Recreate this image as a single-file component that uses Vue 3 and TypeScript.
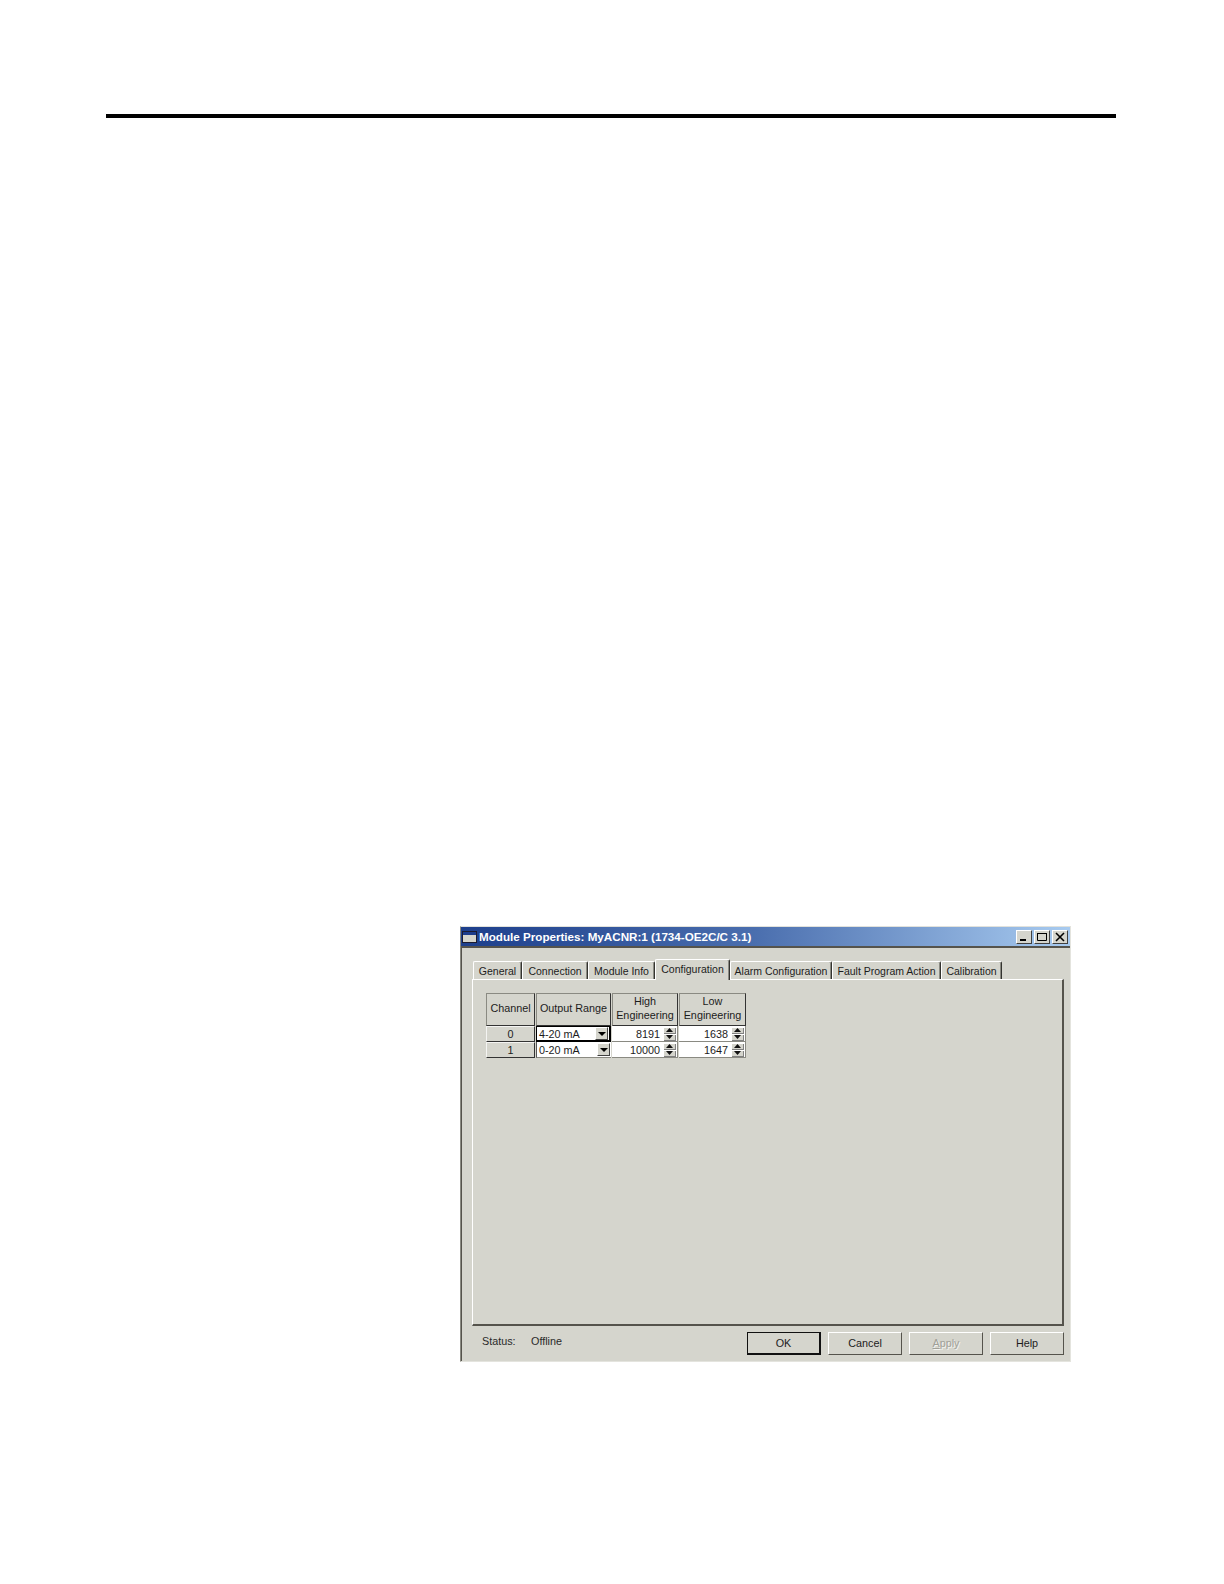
<script setup lang="ts">
const tabs = [
  { label: 'General', width: 49 },
  { label: 'Connection', width: 66 },
  { label: 'Module Info', width: 67 },
  { label: 'Configuration', width: 75, active: true },
  { label: 'Alarm Configuration', width: 102 },
  { label: 'Fault Program Action', width: 109 },
  { label: 'Calibration', width: 61 },
]

const channels = [
  { id: 0, range: '4-20 mA', high: '8191', low: '1638', focused: true },
  { id: 1, range: '0-20 mA', high: '10000', low: '1647', focused: false },
]

const buttons = [
  { label: 'OK', primary: true },
  { label: 'Cancel' },
  { label: 'Apply', disabled: true, mnemonic: 'A' },
  { label: 'Help' },
]
</script>

<template>
  <div class="page">
    <div class="rule"></div>

    <div class="dialog">
      <div class="titlebar">
        <svg class="app-icon" width="15" height="12" viewBox="0 0 15 12">
          <rect x="0.5" y="0.5" width="14" height="11" fill="#d5d5cd" stroke="#1c1c30" />
          <rect x="1" y="1" width="13" height="3" fill="#1c3c8c" />
        </svg>
        <span class="title">Module Properties: MyACNR:1 (1734-OE2C/C 3.1)</span>
        <div class="caption-btns">
          <span class="caption-btn">
            <svg width="12" height="10" viewBox="0 0 12 10"><rect x="2" y="7" width="6" height="2" fill="#000" /></svg>
          </span>
          <span class="caption-btn">
            <svg width="12" height="10" viewBox="0 0 12 10"><path d="M1.5 1.5h9v7h-9z" fill="none" stroke="#000" /><path d="M1 1.5h10" stroke="#000" /></svg>
          </span>
          <span class="caption-btn close">
            <svg width="12" height="10" viewBox="0 0 12 10"><path d="M2 1l8 8M10 1l-8 8" fill="none" stroke="#000" stroke-width="1.6" /></svg>
          </span>
        </div>
      </div>

      <div class="body">
        <div class="tabs">
          <div
            v-for="tab in tabs"
            :key="tab.label"
            class="tab"
            :class="{ active: tab.active }"
            :style="{ width: tab.width + 'px' }"
          >
            {{ tab.label }}
          </div>
        </div>

        <div class="panel">
          <div class="grid">
            <div class="head">Channel</div>
            <div class="head">Output Range</div>
            <div class="head">High<br />Engineering</div>
            <div class="head">Low<br />Engineering</div>

            <template v-for="ch in channels" :key="ch.id">
              <div class="rowhead">{{ ch.id }}</div>
              <div class="cell combo" :class="{ focused: ch.focused }">
                <span class="combo-text">{{ ch.range }}</span>
                <span class="drop">
                  <svg width="8" height="4" viewBox="0 0 8 4"><path d="M0 0h8L4 4z" fill="#000" /></svg>
                </span>
              </div>
              <div class="cell num">
                <span class="num-text">{{ ch.high }}</span>
                <span class="spin">
                  <span class="spin-btn"><svg width="7" height="4" viewBox="0 0 7 4"><path d="M3.5 0L7 4H0z" fill="#111" /></svg></span>
                  <span class="spin-btn"><svg width="7" height="4" viewBox="0 0 7 4"><path d="M0 0h7L3.5 4z" fill="#111" /></svg></span>
                </span>
              </div>
              <div class="cell num">
                <span class="num-text">{{ ch.low }}</span>
                <span class="spin">
                  <span class="spin-btn"><svg width="7" height="4" viewBox="0 0 7 4"><path d="M3.5 0L7 4H0z" fill="#111" /></svg></span>
                  <span class="spin-btn"><svg width="7" height="4" viewBox="0 0 7 4"><path d="M0 0h7L3.5 4z" fill="#111" /></svg></span>
                </span>
              </div>
            </template>
          </div>
        </div>

        <div class="footer">
          <span class="status-label">Status:</span>
          <span class="status-value">Offline</span>
          <div class="actions">
            <button
              v-for="b in buttons"
              :key="b.label"
              class="btn"
              :class="{ primary: b.primary, disabled: b.disabled }"
            >
              <template v-if="b.mnemonic"><u>{{ b.mnemonic }}</u>{{ b.label.slice(1) }}</template>
              <template v-else>{{ b.label }}</template>
            </button>
          </div>
        </div>
      </div>
    </div>
  </div>
</template>

<style scoped>
.page {
  width: 1224px;
  height: 1584px;
  background: #fff;
  padding-top: 114px;
  box-sizing: border-box;
  font-family: "Liberation Sans", Arial, sans-serif;
  font-size: 10.8px;
  color: #1c1c1c;
  overflow: hidden;
}

.rule {
  width: 1010px;
  height: 4px;
  margin-left: 106px;
  background: #000;
}

.dialog {
  width: 611px;
  height: 436px;
  margin: 808px 0 0 460px;
  box-sizing: border-box;
  background: #d5d5cd;
  border-top: 1px solid #e2e2dc;
  border-left: 1px solid #8a8a82;
  border-right: 1px solid #e4e4de;
  border-bottom: 1px solid #e4e4de;
  display: flex;
  flex-direction: column;
}

.titlebar {
  height: 19px;
  display: flex;
  align-items: center;
  padding-left: 1px;
  background: linear-gradient(90deg, #1d3f8c 0%, #4a6eae 48%, #a8cbf0 100%);
  border-bottom: 2px solid #55534c;
  flex: none;
}

.app-icon {
  flex: none;
}

.title {
  margin-left: 2px;
  font-weight: 700;
  font-size: 11.65px;
  color: #fff;
  white-space: nowrap;
}

.caption-btns {
  margin-left: auto;
  margin-right: 2px;
  display: flex;
  gap: 2px;
}

.caption-btn {
  width: 16px;
  height: 14px;
  box-sizing: border-box;
  display: flex;
  align-items: center;
  justify-content: center;
  background: #d5d5cd;
  border: 1px solid;
  border-color: #fff #404040 #404040 #fff;
}

.body {
  flex: 1;
  display: flex;
  flex-direction: column;
  padding: 0 6px 0 10px;
  border-left: 1px solid #55534c;
  min-height: 0;
}

.tabs {
  display: flex;
  align-items: flex-end;
  height: 31px;
  padding-left: 1px;
  flex: none;
  position: relative;
  z-index: 1;
}

.tab {
  height: 18px;
  box-sizing: border-box;
  text-align: center;
  line-height: 19px;
  font-size: 10.5px;
  white-space: nowrap;
  background: #d5d5cd;
  border-top: 1px solid #fff;
  border-left: 1px solid #fff;
  border-right: 1px solid #33332f;
  box-shadow: inset -1px 0 0 #8a8a82;
  border-radius: 2px 2px 0 0;
}

.tab.active {
  height: 21px;
  margin-bottom: -1px;
  padding-bottom: 2px;
}

.panel {
  height: 347px;
  box-sizing: border-box;
  flex: none;
  border-top: 1px solid #fff;
  border-left: 1px solid #fff;
  border-right: 2px solid #55534c;
  border-bottom: 2px solid #55534c;
  padding: 13px 0 0 13px;
}

.grid {
  display: grid;
  grid-template-columns: 49px 75px 66px 67px;
  grid-template-rows: 33px 16px 16px;
  column-gap: 1px;
  width: 260px;
}

.head {
  display: flex;
  align-items: center;
  justify-content: center;
  text-align: center;
  line-height: 14px;
  padding-bottom: 3px;
  box-sizing: border-box;
  border: 1px solid;
  border-color: #8a8a82 #333 #333 #8a8a82;
}

.rowhead {
  display: flex;
  align-items: center;
  justify-content: center;
  box-sizing: border-box;
  border: 1px solid;
  border-color: #f4f4f2 #333 #333 #f4f4f2;
}

.cell {
  display: flex;
  align-items: center;
  background: #fff;
  box-sizing: border-box;
  border-bottom: 1px solid #8a8a82;
  min-width: 0;
}

.combo {
  padding-left: 2px;
  border-left: 1px solid #555;
}

.combo.focused {
  border: 1px solid #000;
  border-right-width: 2px;
  border-bottom-width: 2px;
}

.combo-text {
  flex: 1;
}

.drop {
  width: 13px;
  height: 13px;
  flex: none;
  margin-right: 1px;
  display: flex;
  align-items: center;
  justify-content: center;
  background: #d5d5cd;
  border: 1px solid;
  border-color: #fff #404040 #404040 #fff;
  box-sizing: border-box;
}

.num {
  justify-content: flex-end;
  padding-right: 1px;
  border-right: 1px solid #8a8a82;
}

.num-text {
  margin-right: 3px;
}

.spin {
  width: 13px;
  height: 14px;
  flex: none;
  display: flex;
  flex-direction: column;
}

.spin-btn {
  flex: 1;
  display: flex;
  align-items: center;
  justify-content: center;
  background: #d5d5cd;
  box-shadow: inset 1px 1px 0 #fff, inset -1px -1px 0 #808080;
}

.footer {
  flex: 1;
  display: flex;
  align-items: flex-start;
  padding-top: 6px;
}

.status-label {
  margin: 3px 0 0 10px;
  width: 49px;
  color: #2a2a2a;
}

.status-value {
  margin-top: 3px;
  color: #2a2a2a;
}

.actions {
  margin-left: auto;
  display: flex;
  gap: 7px;
}

.btn {
  width: 74px;
  height: 23px;
  box-sizing: border-box;
  padding: 0 0 1px;
  font: inherit;
  color: #1c1c1c;
  background: #d5d5cd;
  border: 1px solid;
  border-color: #fff #55534c #55534c #fff;
}

.btn.primary {
  border: 2px solid #111;
  border-width: 1px 2px 2px 1px;
}

.btn.disabled {
  color: #a0a098;
  text-shadow: 1px 1px 0 #f4f4f0;
}
</style>

<style>
html,
body {
  margin: 0;
  background: #fff;
}
</style>
